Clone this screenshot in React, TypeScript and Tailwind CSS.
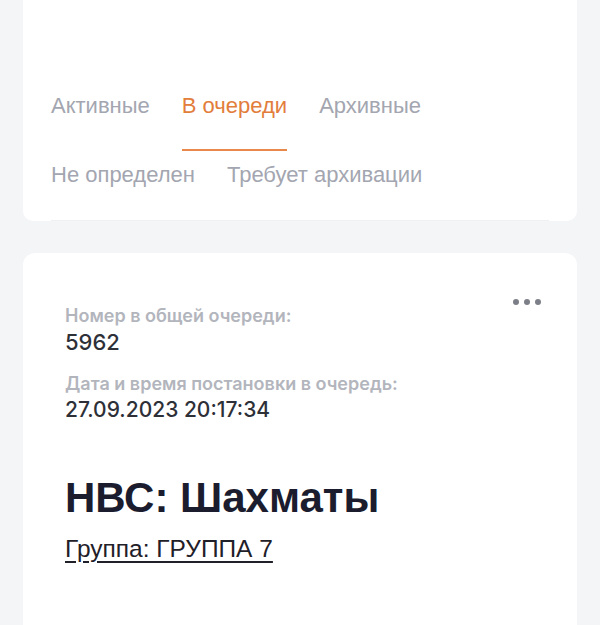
import { useState } from 'react'

const tabs = ['Активные', 'В очереди', 'Архивные', 'Не определен', 'Требует архивации']

export default function App() {
  const [active, setActive] = useState('В очереди')

  return (
    <div className="min-h-screen bg-[#f4f5f7] px-[23px] pb-10 font-['Liberation_Sans',Arial,sans-serif]">
      {/* Tabs card */}
      <div className="bg-white rounded-b-[10px] px-[28px] pt-[82px]">
        <div className="flex flex-wrap gap-x-8 border-b border-[#eef0f3]">
          {tabs.map((t) => (
            <button
              key={t}
              onClick={() => setActive(t)}
              className={`pt-[10px] pb-[29px] border-b-2 text-[22px] leading-7 ${
                active === t ? 'text-[#e27d3c] border-[#e8884a]' : 'text-[#a3a6b0] border-transparent'
              }`}
            >
              {t}
            </button>
          ))}
        </div>
      </div>

      {/* Queue card */}
      <div className="mt-8 bg-white rounded-[12px] pl-[42px] pr-9 pt-[51px] pb-20 relative">
        <button className="absolute right-9 top-[46px] flex gap-[5px]" aria-label="Ещё">
          <span className="w-[6px] h-[6px] rounded-full bg-[#7c7f88]" />
          <span className="w-[6px] h-[6px] rounded-full bg-[#7c7f88]" />
          <span className="w-[6px] h-[6px] rounded-full bg-[#7c7f88]" />
        </button>

        <div className="font-['Inter',sans-serif]">
          <div className="text-[18px] leading-6 font-semibold text-[#b3b5bd]">Номер в общей очереди:</div>
          <div className="text-[22px] leading-7 font-medium text-[#2e3038]">5962</div>
          <div className="text-[18px] leading-6 font-semibold text-[#b3b5bd] mt-4">
            Дата и время постановки в очередь:
          </div>
          <div className="text-[21px] leading-7 font-medium text-[#2e3038]">27.09.2023 20:17:34</div>
        </div>

        <h1 className="mt-[49px] text-[42px] leading-[50px] font-bold text-[#1b1c2e]">НВС: Шахматы</h1>
        <a href="#" className="inline-block mt-[12px] text-[24.5px] leading-7 text-[#1f2028] underline underline-offset-[4px]">
          Группа: ГРУППА 7
        </a>
      </div>
    </div>
  )
}
